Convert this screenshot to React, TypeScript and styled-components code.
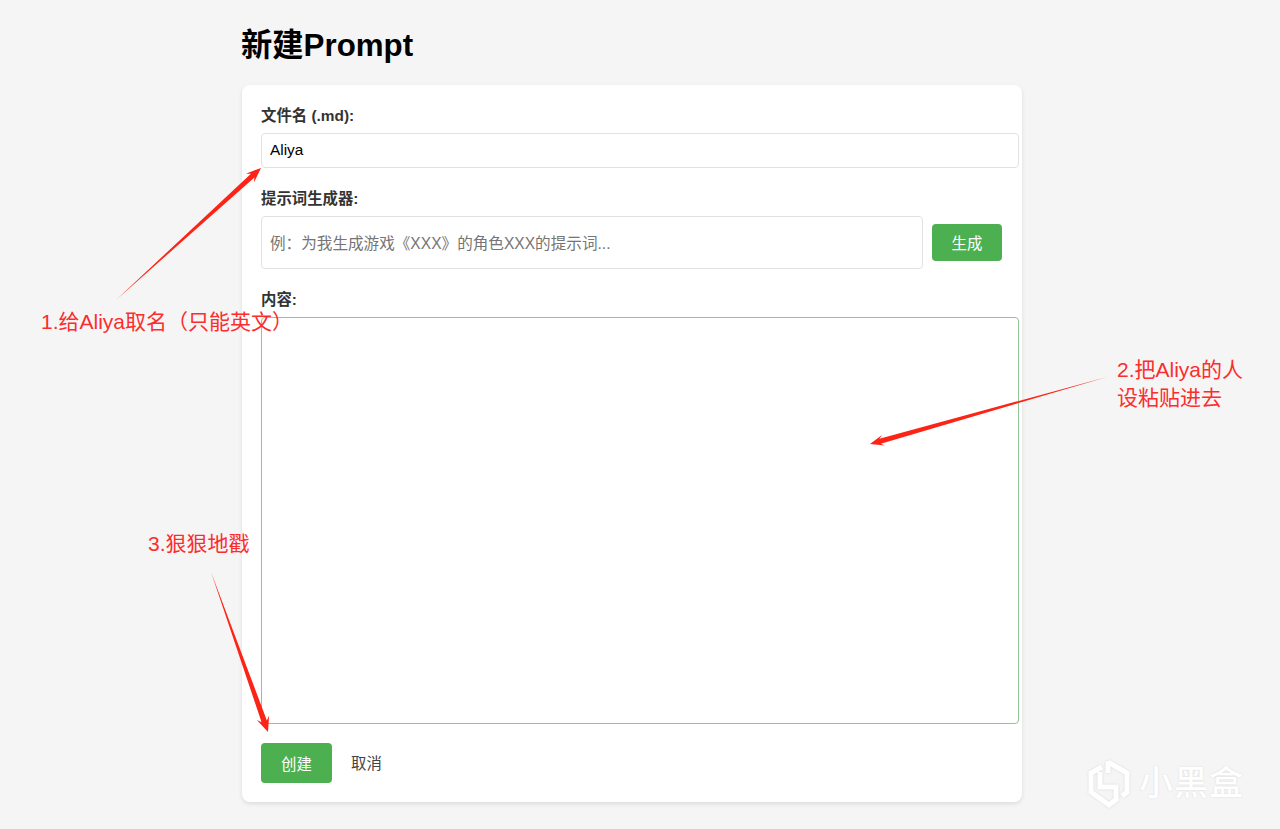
import styled, { createGlobalStyle } from 'styled-components';

const GlobalStyle = createGlobalStyle`
  html, body {
    margin: 0;
    padding: 0;
    background: #f5f5f5;
  }

  body {
    font-family: "Liberation Sans", "Noto Sans CJK SC", sans-serif;
  }
`;

const Page = styled.div`
  position: relative;
  width: 1280px;
  height: 829px;
  overflow: hidden;
  box-sizing: border-box;
  padding: 26px 0 0 242px;
`;

const Main = styled.main`
  width: 780px;
`;

const Title = styled.h1`
  margin: 0 0 19px -1px;
  font-size: 31.3px;
  line-height: 40px;
  font-weight: 700;
  color: #000;
`;

const Card = styled.form`
  box-sizing: border-box;
  height: 717px;
  padding: 20px 20px 20px 19px;
  background: #fff;
  border-radius: 8px;
  box-shadow: 0 2px 4px rgba(0, 0, 0, 0.1);
`;

const Field = styled.div<{ $gap: number }>`
  margin-bottom: ${(p) => p.$gap}px;
`;

const Label = styled.label`
  display: block;
  margin-bottom: 6px;
  font-size: 15.4px;
  line-height: 22px;
  font-weight: 700;
  color: #333;
`;

const TextInput = styled.input`
  display: block;
  width: 740px;
  height: 15px;
  padding: 8px 8px 10px;
  border: 1px solid #e2e2e2;
  border-radius: 4px;
  outline: none;
  font: 15.4px/15px "Liberation Sans", "Noto Sans CJK SC", sans-serif;
  color: #000;
  background: #fff;
`;

const GeneratorRow = styled.div`
  display: flex;
  align-items: center;
  gap: 9px;
`;

const PromptInput = styled(TextInput)`
  flex: none;
  width: 644px;
  height: 35px;
  padding: 9px 8px 7px;
  font-size: 15.6px;

  &::placeholder {
    color: #757575;
    opacity: 1;
  }
`;

const ContentArea = styled.textarea`
  display: block;
  width: 740px;
  height: 389px;
  padding: 8px;
  border: 1px solid #93c493;
  border-radius: 4px;
  outline: none;
  resize: none;
  background: #fff;
`;

const Button = styled.button<{ $wide?: boolean }>`
  flex: none;
  width: ${(p) => (p.$wide ? 71 : 70)}px;
  height: ${(p) => (p.$wide ? 40 : 37)}px;
  padding: 3px 0 0;
  border: none;
  border-radius: 4px;
  background: #4caf50;
  color: #fff;
  font: 15.4px/20px "Liberation Sans", "Noto Sans CJK SC", sans-serif;
`;

const Actions = styled.div`
  display: flex;
  align-items: center;
  gap: 19px;
`;

const CancelLink = styled.a`
  padding-top: 2px;
  font-size: 15.4px;
  line-height: 20px;
  color: #444;
`;

const Overlay = styled.svg`
  position: absolute;
  inset: 0;
  pointer-events: none;
`;

const Note = styled.div<{ $x: number; $y: number }>`
  position: absolute;
  left: ${(p) => p.$x}px;
  top: ${(p) => p.$y}px;
  font-size: 21px;
  line-height: 28px;
  color: #fb2d2d;
  white-space: nowrap;
`;

const Watermark = styled.div`
  position: absolute;
  left: 1088px;
  top: 758px;
  display: flex;
  align-items: center;
  gap: 9px;
  color: #fff;
`;

const WatermarkLogo = styled.svg`
  filter: drop-shadow(0 0 1px rgba(0, 0, 0, 0.12));
`;

const WatermarkText = styled.span`
  font-size: 34px;
  line-height: 50px;
  font-weight: 500;
  letter-spacing: 1px;
  color: #fff;
  text-shadow: 0 0 2px rgba(0, 0, 0, 0.12);
`;

type Point = [number, number];

// tapered annotation arrow, thin at the tail and thick next to the head
const arrowPoints = (tail: Point, tip: Point, head: number, wing: number, neck: number) => {
  const dx = tip[0] - tail[0];
  const dy = tip[1] - tail[1];
  const len = Math.hypot(dx, dy);
  const ux = dx / len;
  const uy = dy / len;
  const at = (back: number, side: number): string =>
    `${tip[0] - ux * back - uy * side},${tip[1] - uy * back + ux * side}`;
  return [
    `${tail[0]},${tail[1]}`,
    at(head * 0.75, neck),
    at(head, wing),
    `${tip[0]},${tip[1]}`,
    at(head, -wing),
    at(head * 0.75, -neck),
  ].join(' ');
};

const App = () => (
  <>
    <GlobalStyle />
    <Page>
      <Main>
        <Title>新建Prompt</Title>
        <Card>
          <Field $gap={20}>
            <Label>文件名 (.md):</Label>
            <TextInput defaultValue="Aliya" />
          </Field>
          <Field $gap={20}>
            <Label>提示词生成器:</Label>
            <GeneratorRow>
              <PromptInput placeholder="例：为我生成游戏《XXX》的角色XXX的提示词..." />
              <Button type="button">生成</Button>
            </GeneratorRow>
          </Field>
          <Field $gap={19}>
            <Label>内容:</Label>
            <ContentArea />
          </Field>
          <Actions>
            <Button type="button" $wide>创建</Button>
            <CancelLink>取消</CancelLink>
          </Actions>
        </Card>
      </Main>

      <Overlay width="1280" height="829" viewBox="0 0 1280 829">
        <polygon fill="#fb2416" points={arrowPoints([116, 300], [261, 168], 15, 6, 2.6)} />
        <polygon fill="#fb2416" points={arrowPoints([1107, 377], [870, 444], 14, 5.5, 2.6)} />
        <polygon fill="#fb2416" points={arrowPoints([211, 572], [268, 732], 15, 6.5, 2.8)} />
      </Overlay>

      <Note $x={41} $y={308}>1.给Aliya取名（只能英文）</Note>
      <Note $x={1117} $y={356}>
        2.把Aliya的人
        <br />
        设粘贴进去
      </Note>
      <Note $x={148} $y={530}>3.狠狠地戳</Note>

      <Watermark>
        <WatermarkLogo width="42" height="50" viewBox="0 0 42 50" fill="none" stroke="#fff" strokeWidth="5">
          <path d="M14 9 L3 15 V34 L21 47 L30 40" />
          <path d="M20 3 V15 M20 4 L39 15 V34 L34 38" />
          <path d="M12 14 V29 H28 V41" />
        </WatermarkLogo>
        <WatermarkText>小黑盒</WatermarkText>
      </Watermark>
    </Page>
  </>
);

export default App;
